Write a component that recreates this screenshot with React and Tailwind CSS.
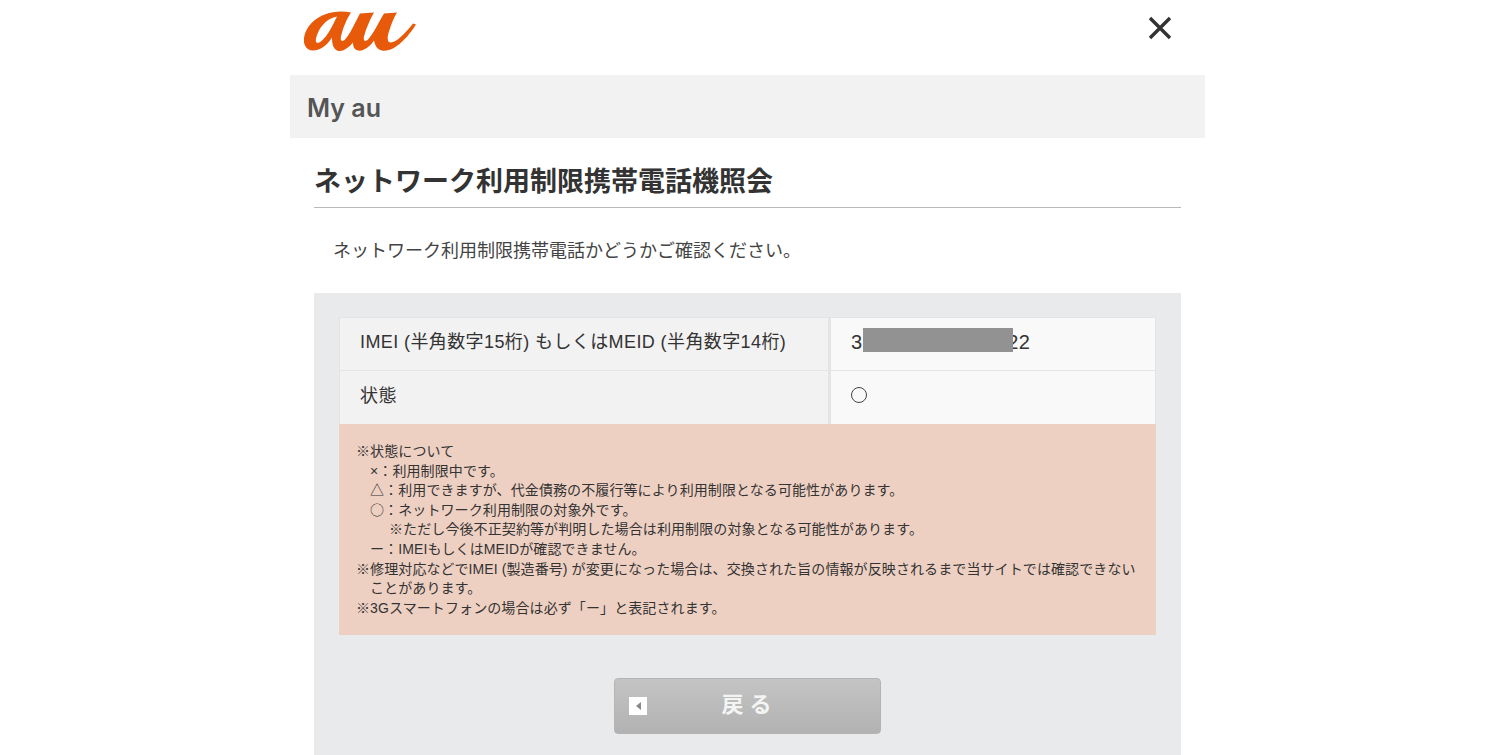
const font = "font-['Liberation_Sans','Noto_Sans_CJK_JP',sans-serif]";

function AuLogo() {
  return (
    <svg className="-mt-[1px]" width="112" height="41" viewBox="0 0 112 40" fill="#e65a0a">
      <path d="M47 1 C34 -2 18 1 8 11 C1 18 -2 28 1 34 C4 41 13 40 20 35 C24 32 26 29 28 26 C28 32 29 37 33 39 C38 41 44 37 49 31 C49 35 50 38 54 39 C60 40 66 35 70 29 C71 34 73 38 78 39 C90 41 103 27 112 13 L109 12 C101 22 92 31 87 31 C83 31 83 26 85 20 C87 13 90 6 93 1 L80 2 C75 10 69 23 64 28 C61 31 59 29 60 25 C62 17 66 8 70 1 L56 2 C51 11 46 23 41 28 C38 31 36 29 37 25 C39 16 43 7 47 1 Z M33 5 C29 13 24 24 18 29 C14 33 11 32 12 27 C14 18 21 7 33 5 Z" fillRule="evenodd" />
    </svg>
  );
}

function Row({ label, children, last }) {
  return (
    <div className={`flex h-[53px] ${last ? "" : "border-b border-[#e3e4e6]"}`}>
      <div className={`w-[488px] bg-[#f2f2f2] pl-[20px] flex items-center text-[18px] tracking-[0.4px] text-[#333] ${last ? "pb-[2px]" : "pb-[4px]"}`}>{label}</div>
      <div className="w-[3px] bg-[#e3e4e6]"></div>
      <div className="flex-1 bg-[#f9f9f9] pl-[20px] pb-[4px] flex items-center text-[20px] text-[#333]">{children}</div>
    </div>
  );
}

function Circle() {
  return <span className="leading-[0] font-['Noto_Sans_CJK_JP',sans-serif]">○</span>;
}

export default function App() {
  return (
    <div className={`h-[755px] overflow-hidden bg-white ${font}`}>
      <div className="w-[915px] ml-[290px]">
        <header className="h-[75px] flex items-start justify-between pl-[14px] pr-[33px] pt-[12px]">
          <AuLogo />
          <svg className="mt-[4px]" width="24" height="24" viewBox="0 0 24 24" stroke="#333" strokeWidth="3.4" fill="none">
            <path d="M2 2 L22 22 M22 2 L2 22" />
          </svg>
        </header>
        <div className="h-[63px] bg-[#f2f2f2] pl-[17px] pt-[5px] flex items-center text-[25px] font-semibold text-[#555] font-['Inter',sans-serif]">My au</div>
        <main className="mx-[24px]">
          <h1 className="h-[70px] pt-[24px] border-b border-[#b9b9b9] text-[27px] leading-[40px] font-bold text-[#333]">
            ネットワーク利用制限携帯電話機照会
          </h1>
          <p className="pl-[19px] pt-[30px] h-[85px] text-[18px] leading-[26px] text-[#444]">
            ネットワーク利用制限携帯電話かどうかご確認ください。
          </p>
          <section className="h-[462px] bg-[#e9eaec] px-[25px] pt-[24px]">
            <div className="border-t border-x border-[#e3e4e6]">
              <Row label="IMEI (半角数字15桁) もしくはMEID (半角数字14桁)">
                <span>3</span>
                <span className="w-[150px] h-[24px] -mt-[4px] ml-[1px] bg-[#929292] relative z-10"></span>
                <span className="-ml-[6px] tracking-[0.5px]">22</span>
              </Row>
              <Row label="状態" last>
                <span className="w-[16px] h-[16px] -mt-[2px] rounded-full border border-[#444]"></span>
              </Row>
            </div>
            <div className="h-[211px] bg-[#eed0c2] pl-[17px] pt-[18px] text-[14px] leading-[19.6px] tracking-[0.1px] text-[#333]">
              <div>※状態について</div>
              <div className="pl-[14px]">×：利用制限中です。</div>
              <div className="pl-[14px]">△：利用できますが、代金債務の不履行等により利用制限となる可能性があります。</div>
              <div className="pl-[14px]"><Circle />：ネットワーク利用制限の対象外です。</div>
              <div className="pl-[33px]">※ただし今後不正契約等が判明した場合は利用制限の対象となる可能性があります。</div>
              <div className="pl-[14px]">ー：IMEIもしくはMEIDが確認できません。</div>
              <div>※修理対応などでIMEI (製造番号) が変更になった場合は、交換された旨の情報が反映されるまで当サイトでは確認できない</div>
              <div className="pl-[14px]">ことがあります。</div>
              <div>※3Gスマートフォンの場合は必ず「ー」と表記されます。</div>
            </div>
            <div className="flex justify-center pt-[43px]">
              <button className="relative w-[267px] h-[56px] pb-[4px] pl-[4px] rounded-[4px] border border-[#b4b4b4] bg-gradient-to-b from-[#c4c4c4] to-[#b2b2b2] text-[#f4f4f4] text-[22px] font-bold tracking-[6px]">
                <span className="absolute left-[14px] top-[18px] w-[18px] h-[18px] bg-white flex items-center justify-center">
                  <span className="border-y-[4px] border-y-transparent border-r-[5px] border-r-[#888]"></span>
                </span>
                戻る
              </button>
            </div>
          </section>
        </main>
      </div>
    </div>
  );
}
